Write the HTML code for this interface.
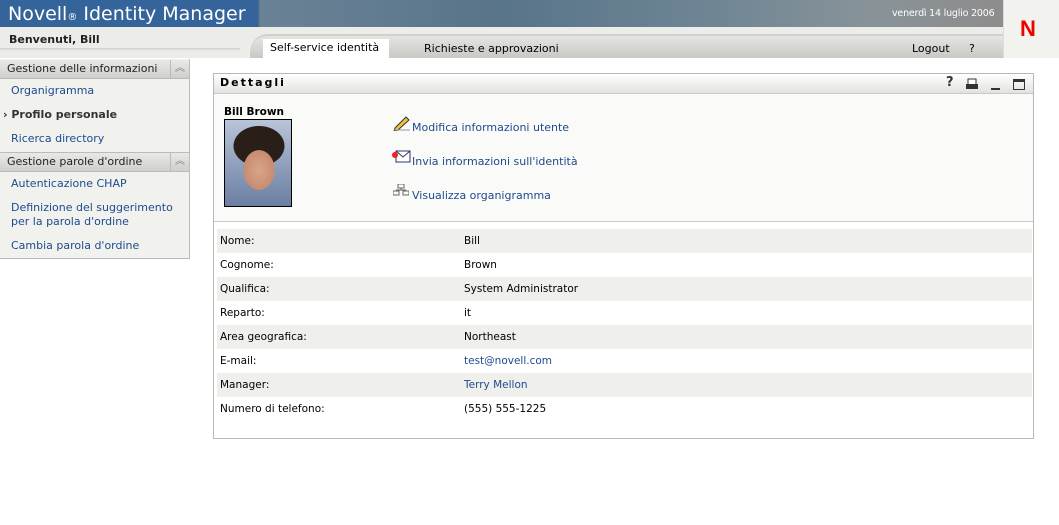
<!DOCTYPE html>
<html><head><meta charset="utf-8"><style>
*{margin:0;padding:0;box-sizing:border-box}
body{width:1059px;height:525px;background:#fff;font-family:"DejaVu Sans","Liberation Sans",sans-serif;font-size:11px;color:#000;position:relative;overflow:hidden}
.abs{position:absolute}
a{color:#1d4b8f;text-decoration:none}
</style></head><body>
<div class="abs" style="left:0;top:0;width:1003px;height:27px;background:linear-gradient(90deg,#3a6494 0,#3a6494 258px,#6b8296 260px,#587489 500px,#6d8494 700px,#889399 870px,#8d8d8d 990px,#8d8d8d 1003px)"></div>
<div class="abs" style="left:0;top:0;width:258px;height:27px;background:#34649a"></div>
<div class="abs" style="left:8px;top:3px;color:#fff;font-size:19px;font-family:'DejaVu Sans',sans-serif">Novell<span style="font-size:10px">®</span> Identity Manager</div>
<div class="abs" style="left:892px;top:8px;color:#fff;font-size:9.5px;letter-spacing:-0.2px">venerdì 14 luglio 2006</div>
<div class="abs" style="left:1003px;top:0;width:56px;height:58px;background:#f2f2ef;border-left:1px solid #ddd"></div>
<div class="abs" style="left:1020px;top:16px;color:#e00;font-size:22px;font-weight:bold;font-family:'Liberation Sans',sans-serif">N</div>
<div class="abs" style="left:0;top:27px;width:1003px;height:31px;background:#ecece8"></div>
<div class="abs" style="left:0;top:48px;width:240px;height:3px;background:linear-gradient(#ccc,#eee)"></div>
<div class="abs" style="left:250px;top:34px;width:753px;height:24px;background:linear-gradient(#e5e5e2,#c8c8c4);border-top:2px solid #d0d0cc;border-top-left-radius:18px"></div>
<div class="abs" style="left:9px;top:33px;font-weight:bold;font-size:11px;color:#222">Benvenuti, Bill</div>
<div class="abs" style="left:263px;top:39px;width:126px;height:20px;background:#fff"></div>
<div class="abs" style="left:270px;top:41px;font-size:11px">Self-service identità</div>
<div class="abs" style="left:424px;top:42px;font-size:11px">Richieste e approvazioni</div>
<div class="abs" style="left:912px;top:42px;font-size:11px">Logout</div>
<div class="abs" style="left:969px;top:42px;font-size:11px">?</div>

<div class="abs" style="left:0;top:59px;width:190px;height:200px;background:#f1f1ee;border-right:1px solid #bbb;border-bottom:1px solid #bbb"></div>
<div class="abs" style="left:0;top:60px;width:189px;height:19px;background:linear-gradient(#e9e9e5,#cfcfcb);border-bottom:1px solid #bbb"></div>
<div class="abs" style="left:7px;top:62px;font-size:11px;color:#222">Gestione delle informazioni</div>
<div class="abs" style="left:170px;top:60px;width:19px;height:19px;border-left:1px solid #bbb;color:#888;font-size:10px;text-align:center;line-height:18px">︽</div>
<div class="abs" style="left:11px;top:84px"><a>Organigramma</a></div>
<div class="abs" style="left:3px;top:108px;font-weight:bold;color:#333">› Profilo personale</div>
<div class="abs" style="left:11px;top:132px"><a>Ricerca directory</a></div>
<div class="abs" style="left:0;top:152px;width:189px;height:20px;background:linear-gradient(#e9e9e5,#cfcfcb);border-top:1px solid #bbb;border-bottom:1px solid #bbb"></div>
<div class="abs" style="left:7px;top:155px;font-size:11px;color:#222">Gestione parole d'ordine</div>
<div class="abs" style="left:170px;top:153px;width:19px;height:18px;border-left:1px solid #bbb;color:#888;font-size:10px;text-align:center;line-height:18px">︽</div>
<div class="abs" style="left:11px;top:177px"><a>Autenticazione CHAP</a></div>
<div class="abs" style="left:11px;top:201px;line-height:14px"><a>Definizione del suggerimento<br>per la parola d'ordine</a></div>
<div class="abs" style="left:11px;top:239px"><a>Cambia parola d'ordine</a></div>

<div class="abs" style="left:213px;top:73px;width:821px;height:366px;border:1px solid #b8b8b8;background:#fafaf8"></div>
<div class="abs" style="left:214px;top:74px;width:819px;height:20px;background:linear-gradient(#fff,#e2e2df);border-bottom:1px solid #c8c8c8"></div>
<div class="abs" style="left:220px;top:76px;font-weight:bold;letter-spacing:2px;font-size:11px">Dettagli</div>
<div class="abs" style="left:946px;top:75px;font-weight:bold;font-size:13px;color:#333">?</div>
<svg class="abs" style="left:965px;top:78px" width="14" height="13"><rect x="3" y="1" width="8" height="6" fill="#fff" stroke="#333"/><rect x="1" y="6" width="12" height="5" fill="#333"/></svg>
<div class="abs" style="left:991px;top:88px;width:9px;height:2px;background:#333"></div>
<div class="abs" style="left:1013px;top:79px;width:12px;height:11px;border:1px solid #333;border-top-width:3px"></div>
<div class="abs" style="left:224px;top:106px;font-weight:bold;font-size:10.5px">Bill Brown</div>
<div class="abs" style="left:224px;top:119px;width:68px;height:88px;border:1px solid #000;background:radial-gradient(ellipse 22px 28px at 34px 50px,#d9a58a 0,#c88c70 70%,transparent 72%),radial-gradient(ellipse 28px 22px at 34px 26px,#2a1e18 0,#2a1e18 90%,transparent 92%),linear-gradient(#b8c4d8,#6b7fa3)"></div>
<svg class="abs" style="left:393px;top:115px" width="18" height="16"><path d="M2 13 L13 2 L16 5 L5 15 L1 16 Z" fill="#f0c040" stroke="#333" stroke-width="1"/><path d="M1 15 H17" stroke="#999"/></svg>
<div class="abs" style="left:412px;top:121px"><a>Modifica informazioni utente</a></div>
<svg class="abs" style="left:392px;top:150px" width="20" height="14"><rect x="4" y="1" width="14" height="11" fill="#fff" stroke="#336"/><path d="M4 1 L11 7 L18 1" fill="none" stroke="#336"/><circle cx="3" cy="5" r="3" fill="#e22"/></svg>
<div class="abs" style="left:412px;top:155px"><a>Invia informazioni sull'identità</a></div>
<svg class="abs" style="left:393px;top:184px" width="16" height="12"><rect x="5" y="0" width="6" height="4" fill="none" stroke="#666"/><rect x="0" y="7" width="6" height="4" fill="none" stroke="#666"/><rect x="10" y="7" width="6" height="4" fill="none" stroke="#666"/><path d="M8 4 V6 M3 6 H13" stroke="#666"/></svg>
<div class="abs" style="left:412px;top:189px"><a>Visualizza organigramma</a></div>
<div class="abs" style="left:214px;top:221px;width:819px;height:1px;background:#c8c8c8"></div>
<div class="abs" style="left:214px;top:222px;width:819px;height:216px;background:#fff"></div>
<div class="abs" style="left:217px;top:229px;width:815px;font-size:10.5px">
<div style="height:24px;line-height:25px;background:#efefeb;position:relative"><span style="margin-left:3px">Nome:</span><span style="position:absolute;left:247px">Bill</span></div>
<div style="height:24px;line-height:25px;position:relative"><span style="margin-left:3px">Cognome:</span><span style="position:absolute;left:247px">Brown</span></div>
<div style="height:24px;line-height:25px;background:#efefeb;position:relative"><span style="margin-left:3px">Qualifica:</span><span style="position:absolute;left:247px">System Administrator</span></div>
<div style="height:24px;line-height:25px;position:relative"><span style="margin-left:3px">Reparto:</span><span style="position:absolute;left:247px">it</span></div>
<div style="height:24px;line-height:25px;background:#efefeb;position:relative"><span style="margin-left:3px">Area geografica:</span><span style="position:absolute;left:247px">Northeast</span></div>
<div style="height:24px;line-height:25px;position:relative"><span style="margin-left:3px">E-mail:</span><span style="position:absolute;left:247px"><a>test@novell.com</a></span></div>
<div style="height:24px;line-height:25px;background:#efefeb;position:relative"><span style="margin-left:3px">Manager:</span><span style="position:absolute;left:247px"><a>Terry Mellon</a></span></div>
<div style="height:24px;line-height:25px;position:relative"><span style="margin-left:3px">Numero di telefono:</span><span style="position:absolute;left:247px">(555) 555-1225</span></div>
</div>
</body></html>
